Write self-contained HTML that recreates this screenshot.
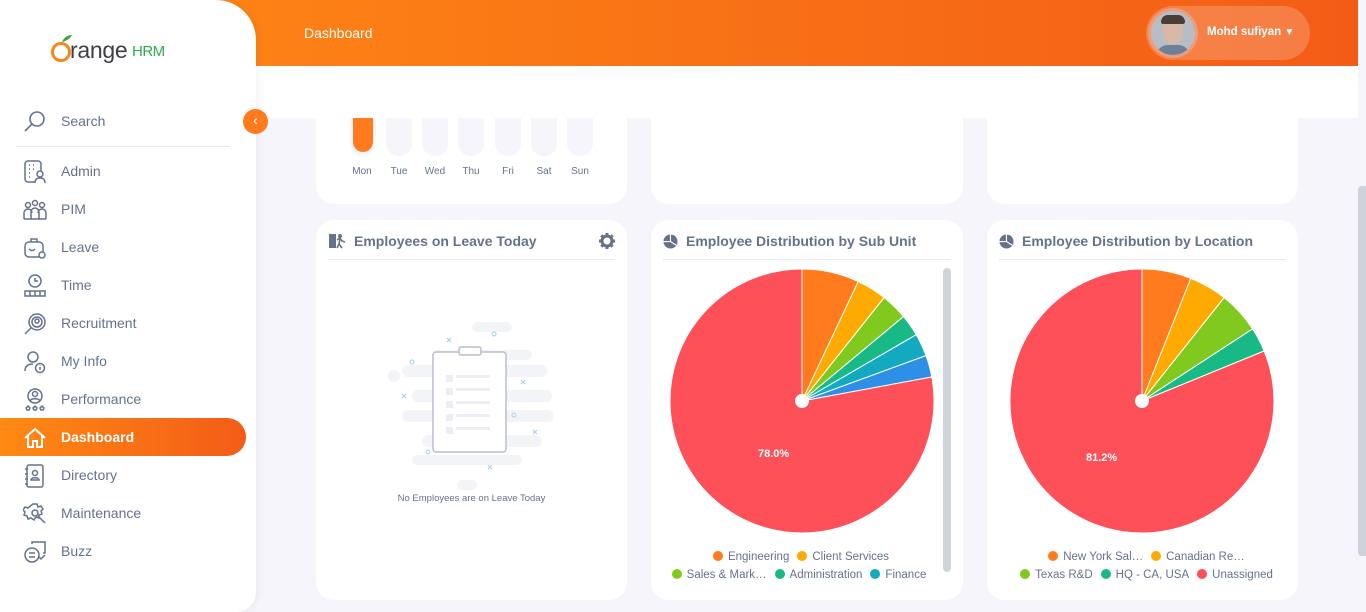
<!DOCTYPE html>
<html><head><meta charset="utf-8"><style>
*{margin:0;padding:0;box-sizing:border-box}
body{width:1366px;height:612px;overflow:hidden;background:#f6f5fb;font-family:"Liberation Sans",sans-serif;position:relative}
.hdr{position:absolute;left:0;top:0;width:1358px;height:66px;background:linear-gradient(90deg,#ff8a14,#f35c17)}
.sub{position:absolute;left:0;top:66px;width:1358px;height:52px;background:#fff;border-bottom:1px solid #eceef3}
.sb{position:absolute;left:0;top:0;width:256px;height:612px;background:#fff;border-radius:0 40px 20px 0;box-shadow:2px 0 8px rgba(0,0,0,.05);z-index:2}
.item{position:absolute;left:0;width:246px;height:38px;display:flex;align-items:center;color:#64728c;font-size:14px}
.item span{position:absolute;left:61px}
.item svg{position:absolute;left:23px;top:8px}
.act{background:linear-gradient(90deg,#ff8a14,#f35c17);border-radius:0 20px 20px 0;color:#fff;font-weight:bold}
.card{position:absolute;background:#fff;border-radius:18px}
.ttl{position:absolute;left:12px;top:13px;font-size:14px;font-weight:bold;color:#64728c;display:flex;align-items:center;gap:8px}
.line{position:absolute;left:12px;right:12px;top:39px;border-top:1px solid #e8eaef}
.leg{position:absolute;left:0;right:0;font-size:11.5px;color:#64728c;text-align:center;white-space:nowrap}
.d{display:inline-block;width:10px;height:10px;border-radius:50%;margin:0 5px 0 8px;vertical-align:-1px}
.bar{position:absolute;top:0;width:26px;height:38px;background:#f6f5fb;border-radius:0 0 13px 13px}
.day{position:absolute;top:50px;font-size:10px;color:#64728c;width:36px;text-align:center}
</style></head><body>
<div class="hdr"></div>
<div style="position:absolute;left:304px;top:25px;color:#fff;font-size:14px">Dashboard</div>
<div style="position:absolute;left:1146px;top:6px;width:164px;height:54px;border-radius:27px;background:rgba(255,255,255,.2)"></div>
<div style="position:absolute;left:1148px;top:8px;width:50px;height:50px;border-radius:50%;background:#eb9e7e;padding:3px"><div style="width:44px;height:44px;border-radius:50%;overflow:hidden;background:#b7bcc5;position:relative"><div style="position:absolute;left:12px;top:7px;width:20px;height:26px;border-radius:45%;background:#d8b9a7"></div><div style="position:absolute;left:10px;top:4px;width:24px;height:9px;border-radius:10px 10px 3px 3px;background:#4a3d35"></div><div style="position:absolute;left:5px;top:34px;width:34px;height:14px;border-radius:12px 12px 0 0;background:#6e7f96"></div></div></div>
<div style="position:absolute;left:1207px;top:26px;color:#fff;font-size:11.5px;font-weight:bold">Mohd sufiyan <span style="font-size:10px">▼</span></div>
<div class="sub"></div>
<div style="position:absolute;left:1358px;top:0;width:8px;height:612px;background:#f6f5fb"></div>
<div style="position:absolute;left:1358px;top:186px;width:8px;height:370px;background:#cfd2da;border-radius:4px 0 0 4px"></div>

<div class="card" style="left:316px;top:100px;width:311px;height:104px;border-radius:0 0 18px 18px;overflow:hidden">
 <div style="position:absolute;left:0;top:0;width:311px;height:104px">
  <div class="bar" style="left:34px;top:18px;height:38px;background:#f6f5fb"></div>
  <div class="bar" style="left:37px;top:18px;width:20px;height:34px;background:#ff7b1d;border-radius:0 0 10px 10px"></div>
  <div class="bar" style="left:70px;top:18px"></div><div class="bar" style="left:106px;top:18px"></div><div class="bar" style="left:142px;top:18px"></div><div class="bar" style="left:179px;top:18px"></div><div class="bar" style="left:215px;top:18px"></div><div class="bar" style="left:251px;top:18px"></div>
  <div class="day" style="left:28px;top:66px">Mon</div><div class="day" style="left:65px;top:66px">Tue</div><div class="day" style="left:101px;top:66px">Wed</div><div class="day" style="left:137px;top:66px">Thu</div><div class="day" style="left:174px;top:66px">Fri</div><div class="day" style="left:210px;top:66px">Sat</div><div class="day" style="left:246px;top:66px">Sun</div>
 </div>
</div>
<div class="sub" style="left:256px;width:1102px;z-index:1;border:none"></div>
<div class="card" style="left:651px;top:118px;width:312px;height:86px;border-radius:0 0 18px 18px"></div>
<div class="card" style="left:987px;top:118px;width:311px;height:86px;border-radius:0 0 18px 18px"></div>

<div class="card" style="left:316px;top:220px;width:311px;height:380px">
 <div class="ttl"><svg width="18" height="16" viewBox="0 0 18 16"><rect x="1" y="1" width="7" height="14" fill="#64728c"/><circle cx="12" cy="3" r="2" fill="#64728c"/><path d="M9 7l3-2 2 3 3 1M12 6l-1 5-2 4M11 11l3 4" stroke="#64728c" stroke-width="1.6" fill="none"/></svg>Employees on Leave Today</div>
 <svg style="position:absolute;left:283px;top:13px" width="16" height="16" viewBox="0 0 16 16"><circle cx="8" cy="8" r="5" fill="none" stroke="#64728c" stroke-width="3"/><g stroke="#64728c" stroke-width="3"><path d="M8 0v3M8 13v3M0 8h3M13 8h3M2.3 2.3l2 2M11.7 11.7l2 2M2.3 13.7l2-2M11.7 4.3l2-2"/></g></svg>
 <div class="line"></div>
 <svg style="position:absolute;left:66px;top:100px" width="180" height="170" viewBox="0 0 180 170">
  <g fill="#f3f4f8"><rect x="90" y="2" width="40" height="10" rx="5"/><rect x="50" y="30" width="100" height="10" rx="5"/><rect x="20" y="45" width="145" height="12" rx="6"/><rect x="6" y="50" width="12" height="12" rx="6"/><rect x="30" y="70" width="140" height="12" rx="6"/><rect x="20" y="90" width="150" height="12" rx="6"/><rect x="160" y="90" width="12" height="12" rx="6"/><rect x="40" y="115" width="120" height="12" rx="6"/><rect x="30" y="135" width="110" height="10" rx="5"/><rect x="75" y="160" width="20" height="10" rx="5"/></g>
  <rect x="51" y="32" width="73" height="100" rx="3" fill="#fff" stroke="#b9bfca" stroke-width="1.5"/>
  <rect x="77" y="27" width="22" height="8" rx="2" fill="#fff" stroke="#b9bfca" stroke-width="1.5"/>
  <g fill="#eceef3"><rect x="64" y="55" width="7" height="7"/><rect x="74" y="55" width="34" height="3"/><rect x="64" y="68" width="7" height="7"/><rect x="74" y="68" width="34" height="3"/><rect x="64" y="81" width="7" height="7"/><rect x="74" y="81" width="34" height="3"/><rect x="64" y="94" width="7" height="7"/><rect x="74" y="94" width="34" height="3"/><rect x="64" y="107" width="7" height="7"/><rect x="74" y="107" width="34" height="3"/></g>
  <g fill="none" stroke="#9fd3ec" stroke-width="1"><circle cx="112" cy="14" r="2"/><circle cx="30" cy="42" r="2"/><circle cx="132" cy="95" r="2"/><circle cx="46" cy="132" r="2"/><path d="M20 74l4 4M24 74l-4 4M139 60l4 4M143 60l-4 4M151 110l4 4M155 110l-4 4M106 145l4 4M110 145l-4 4M65 18l4 4M69 18l-4 4"/></g>
 </svg>
 <div style="position:absolute;left:0;right:0;top:273px;text-align:center;font-size:9.5px;color:#64728c">No Employees are on Leave Today</div>
</div>

<div class="card" style="left:651px;top:220px;width:312px;height:380px">
 <div class="ttl"><svg width="15" height="15" viewBox="0 0 16 16"><circle cx="8" cy="8" r="7.5" fill="#64728c"/><path d="M8 0.5V8L14 12M8 8H0.5" stroke="#fff" stroke-width="1.2" fill="none"/></svg>Employee Distribution by Sub Unit</div>
 <div class="line" style="right:12px"></div>
 <div style="position:absolute;left:292px;top:48px;width:8px;height:304px;background:#d0d3dc;border-radius:4px"></div>
 <div class="leg" style="top:331px;right:20px"><span class="d" style="background:#ff7b1d"></span>Engineering<span class="d" style="background:#ffaa00"></span>Client Services</div>
 <div class="leg" style="top:349px;right:20px;left:-4px"><span class="d" style="background:#80c91f"></span>Sales &amp; Mark…<span class="d" style="background:#17b985"></span>Administration<span class="d" style="background:#12a9c1"></span>Finance</div>
</div>

<div class="card" style="left:987px;top:220px;width:311px;height:380px">
 <div class="ttl"><svg width="15" height="15" viewBox="0 0 16 16"><circle cx="8" cy="8" r="7.5" fill="#64728c"/><path d="M8 0.5V8L14 12M8 8H0.5" stroke="#fff" stroke-width="1.2" fill="none"/></svg>Employee Distribution by Location</div>
 <div class="line"></div>
 <div class="leg" style="top:331px"><span class="d" style="background:#ff7b1d"></span>New York Sal…<span class="d" style="background:#ffaa00"></span>Canadian Re…</div>
 <div class="leg" style="top:349px"><span class="d" style="background:#80c91f"></span>Texas R&amp;D<span class="d" style="background:#17b985"></span>HQ - CA, USA<span class="d" style="background:#fd5058"></span>Unassigned</div>
</div>

<svg style="position:absolute;left:0;top:0" width="1366" height="612">
 <g stroke="#fff" stroke-width="1">
 <path d="M802 401L802 269A132 132 0 0 1 858.2 281.5Z" fill="#ff7b1d"/>
 <path d="M802 401L858.2 281.5A132 132 0 0 1 884.2 297.6Z" fill="#ffaa00"/>
 <path d="M802 401L884.2 297.6A132 132 0 0 1 903.5 316.6Z" fill="#80c91f"/>
 <path d="M802 401L903.5 316.6A132 132 0 0 1 916.2 334.7Z" fill="#17b985"/>
 <path d="M802 401L916.2 334.7A132 132 0 0 1 926 355.6Z" fill="#12a9c1"/>
 <path d="M802 401L926 355.6A132 132 0 0 1 931.8 377Z" fill="#2e8fe6"/>
 <path d="M802 401L931.8 377A132 132 0 1 1 802 269Z" fill="#fd5058"/>
 <path d="M1142 401L1142 269A132 132 0 0 1 1190.8 278.4Z" fill="#ff7b1d"/>
 <path d="M1142 401L1190.8 278.4A132 132 0 0 1 1224.2 297.6Z" fill="#ffaa00"/>
 <path d="M1142 401L1224.2 297.6A132 132 0 0 1 1252.6 328.9Z" fill="#80c91f"/>
 <path d="M1142 401L1252.6 328.9A132 132 0 0 1 1264.1 351Z" fill="#17b985"/>
 <path d="M1142 401L1264.1 351A132 132 0 1 1 1142 269Z" fill="#fd5058"/>
 </g>
 <circle cx="802" cy="401" r="7" fill="#fff"/><circle cx="1142" cy="401" r="7" fill="#fff"/>
 <text x="758" y="457" fill="#fff" font-size="11" font-weight="bold" font-family="Liberation Sans">78.0%</text>
 <text x="1086" y="461" fill="#fff" font-size="11" font-weight="bold" font-family="Liberation Sans">81.2%</text>
</svg>

<div class="sb">
 <div style="position:absolute;left:50px;top:32px;width:130px;height:32px">
  <svg width="24" height="32" viewBox="0 0 24 32" style="position:absolute;left:0;top:0"><circle cx="11" cy="20" r="8.5" fill="none" stroke="#f7861c" stroke-width="3"/><path d="M12 10c2-5 6-7 10-7-2 4-6 6-10 7z" fill="#3fa54a"/></svg>
  <span style="position:absolute;left:20px;top:5px;font-family:'Liberation Sans',sans-serif;font-size:23px;color:#3e3e44;letter-spacing:-0.3px">range</span><span style="position:absolute;left:82px;top:11px;font-family:'Liberation Sans',sans-serif;font-size:15px;color:#2fa84f;letter-spacing:-0.5px">HRM</span>
 </div>
 <div class="item" style="top:102px"><svg width="24" height="24" viewBox="0 0 24 24" fill="none" stroke="#64728c" stroke-width="1.6"><circle cx="14" cy="9" r="7"/><path d="M9 14l-7 7"/></svg><span>Search</span></div>
 <div style="position:absolute;left:16px;top:146px;width:214px;border-top:1px solid #e8eaef"></div>
 <div class="item" style="top:152px"><svg width="24" height="24" viewBox="0 0 24 24" fill="none" stroke="#64728c" stroke-width="1.5"><rect x="2" y="1" width="16" height="21" rx="3"/><circle cx="17" cy="14" r="3" fill="#fff"/><path d="M12 23c0-4 2-5 5-5s5 1 5 5" fill="#fff"/><path d="M6 5h1M10 5h1M6 9h1M10 9h1M6 13h1M6 17h1"/></svg><span>Admin</span></div>
 <div class="item" style="top:190px"><svg width="24" height="24" viewBox="0 0 24 24" fill="none" stroke="#64728c" stroke-width="1.5"><circle cx="5" cy="7" r="2.5"/><circle cx="12" cy="5" r="2.5"/><circle cx="19" cy="7" r="2.5"/><path d="M1 21v-6a3 3 0 0 1 8 0M8 21v-7a4 4 0 0 1 8 0v7M15 15a3 3 0 0 1 8 0v6M1 21h22"/></svg><span>PIM</span></div>
 <div class="item" style="top:228px"><svg width="24" height="24" viewBox="0 0 24 24" fill="none" stroke="#64728c" stroke-width="1.5"><rect x="2" y="6" width="18" height="15" rx="4"/><path d="M8 6V3h6v3M6 13c2 2 4 2 6 0"/><circle cx="19" cy="19" r="3" fill="#fff"/></svg><span>Leave</span></div>
 <div class="item" style="top:266px"><svg width="24" height="24" viewBox="0 0 24 24" fill="none" stroke="#64728c" stroke-width="1.5"><circle cx="12" cy="7" r="6"/><path d="M12 4v3h3M2 22v-5h20v5zM7 17v5M12 17v5M17 17v5"/></svg><span>Time</span></div>
 <div class="item" style="top:304px"><svg width="24" height="24" viewBox="0 0 24 24" fill="none" stroke="#64728c" stroke-width="1.5"><circle cx="14" cy="10" r="8"/><circle cx="14" cy="10" r="5"/><circle cx="14" cy="9" r="2"/><path d="M8 16l-6 6"/></svg><span>Recruitment</span></div>
 <div class="item" style="top:342px"><svg width="24" height="24" viewBox="0 0 24 24" fill="none" stroke="#64728c" stroke-width="1.5"><circle cx="10" cy="7" r="5"/><path d="M2 21c0-5 3-7 8-7"/><circle cx="17" cy="18" r="4.5"/><path d="M17 17v3M17 15.5v.5"/></svg><span>My Info</span></div>
 <div class="item" style="top:380px"><svg width="24" height="24" viewBox="0 0 24 24" fill="none" stroke="#64728c" stroke-width="1.5"><circle cx="12" cy="8" r="7"/><circle cx="12" cy="6" r="2.5"/><path d="M7 13c1-3 9-3 10 0M3 20l2-2 2 2-1 2h-2zM10 20l2-2 2 2-1 2h-2zM17 20l2-2 2 2-1 2h-2z"/></svg><span>Performance</span></div>
 <div class="item act" style="top:418px"><svg width="24" height="24" viewBox="0 0 24 24" fill="none" stroke="#fff" stroke-width="2"><path d="M2 12L12 3l10 9M5 10v11h5v-6h4v6h5V10"/></svg><span>Dashboard</span></div>
 <div class="item" style="top:456px"><svg width="24" height="24" viewBox="0 0 24 24" fill="none" stroke="#64728c" stroke-width="1.5"><rect x="4" y="1" width="16" height="22" rx="2"/><path d="M2 5h3M2 10h3M2 15h3M2 20h3"/><circle cx="12" cy="9" r="2.5"/><path d="M8 16c0-3 8-3 8 0z"/></svg><span>Directory</span></div>
 <div class="item" style="top:494px"><svg width="24" height="24" viewBox="0 0 24 24" fill="none" stroke="#64728c" stroke-width="1.5"><path d="M10 2h4l1 3 3-1 2 3-2 2 1 3-3 1v3l-3-1-2 3-3-2-3 1-1-3-3-1 1-3-2-2 2-3 3 1z"/><circle cx="12" cy="11" r="3"/><path d="M15 14l7 7"/></svg><span>Maintenance</span></div>
 <div class="item" style="top:532px"><svg width="24" height="24" viewBox="0 0 24 24" fill="none" stroke="#64728c" stroke-width="1.5"><circle cx="9" cy="15" r="7"/><path d="M6 13h6M6 17h6M9 4V2h13v11h-2M16 17l2 2 4-4"/></svg><span>Buzz</span></div>
</div>
<div style="position:absolute;left:243px;top:109px;width:25px;height:25px;border-radius:50%;background:#ff7b1d;color:#fff;font-size:14px;text-align:center;line-height:23px;z-index:5">‹</div>
</body></html>
